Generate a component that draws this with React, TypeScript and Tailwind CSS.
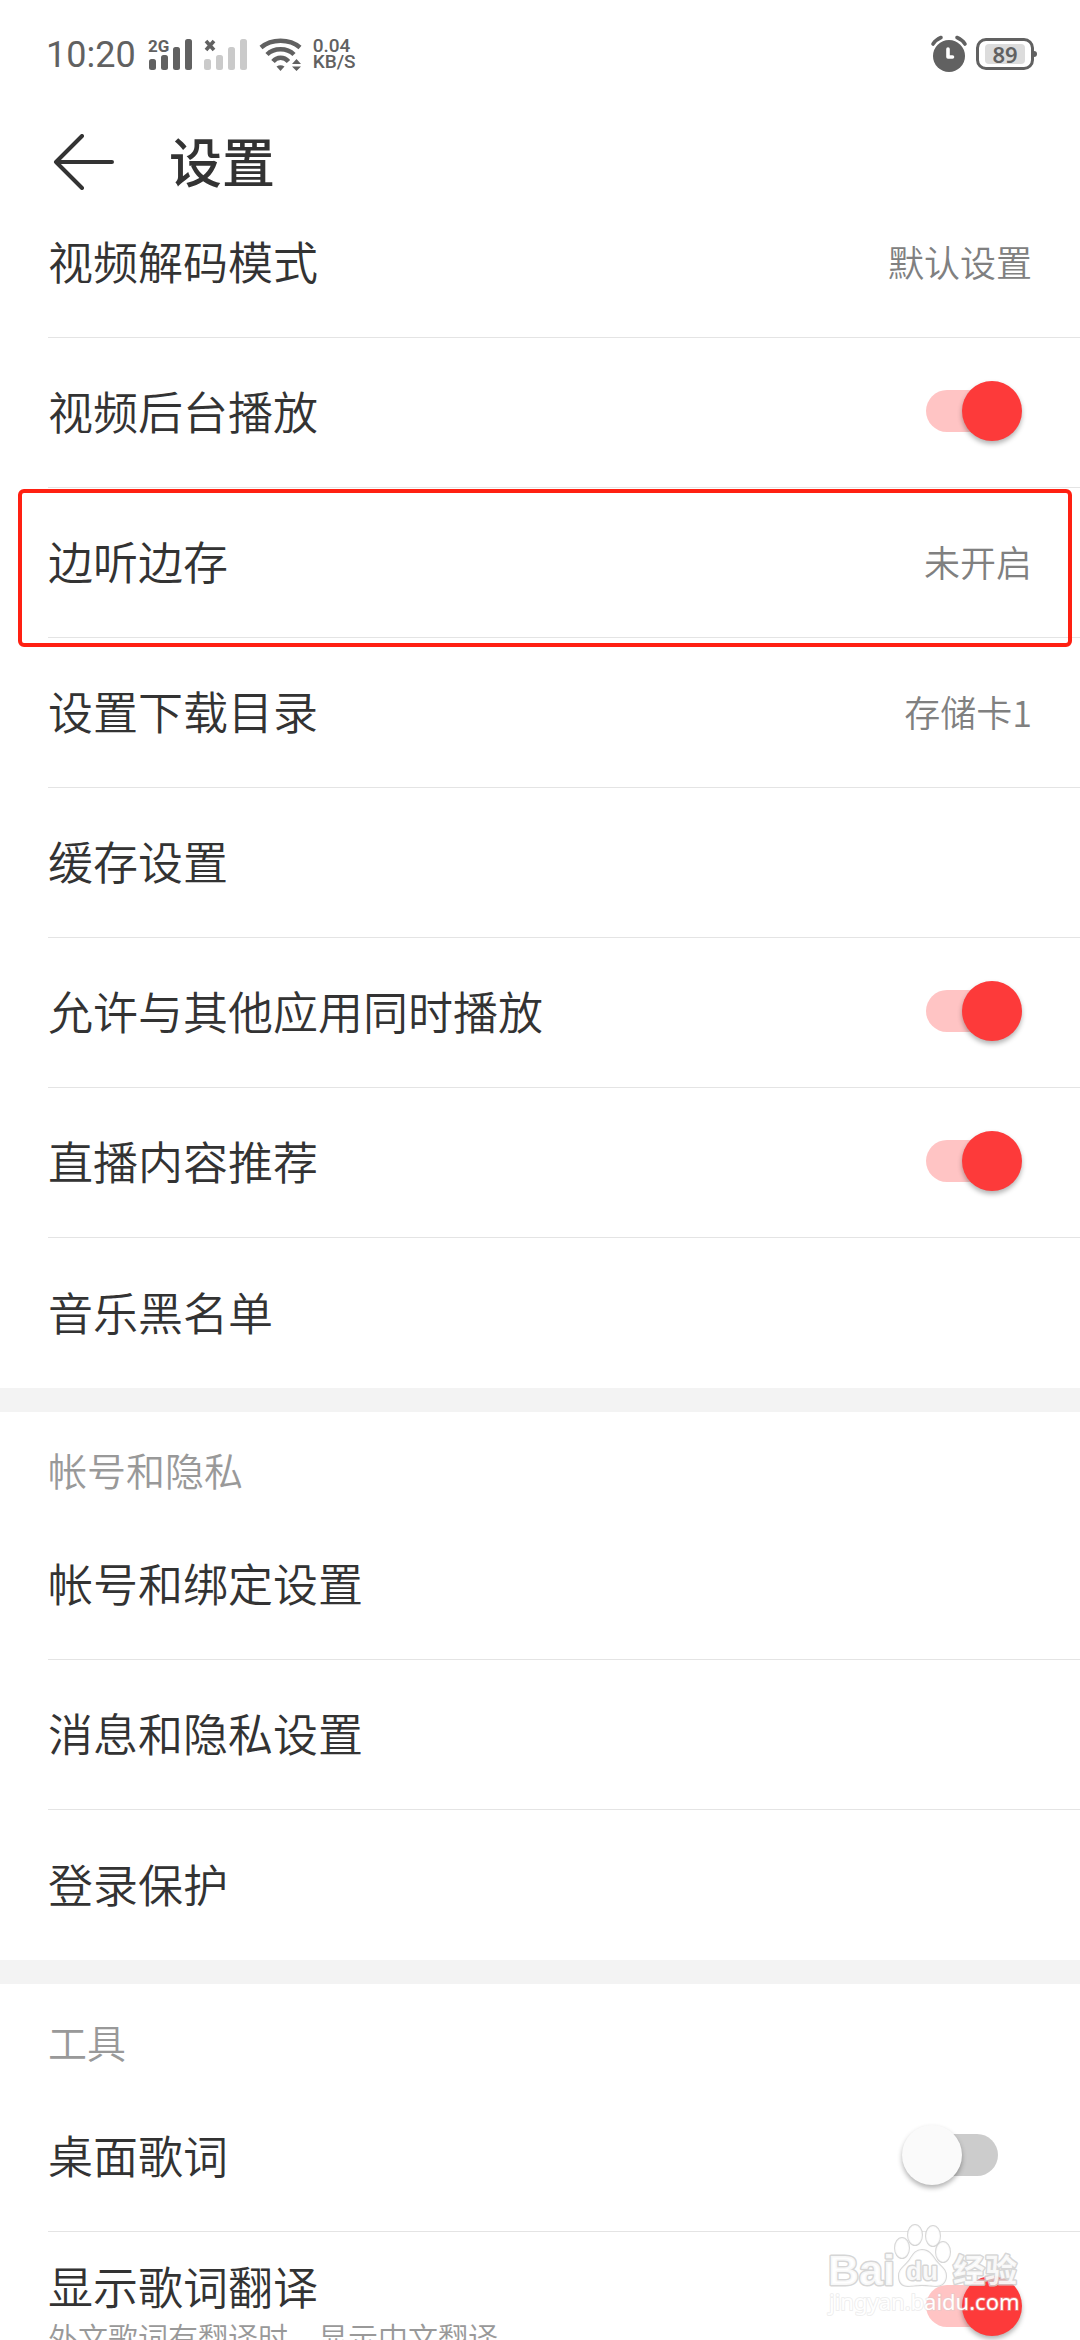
import { useState } from 'react';

type SettingItem = {
  id: string;
  label: string;
  hint?: string;
  value?: string;
  toggle?: boolean;
  highlighted?: boolean;
};

type SettingSection = {
  id: string;
  title?: string;
  items: SettingItem[];
};

const SECTIONS: SettingSection[] = [
  {
    id: 'playback',
    items: [
      { id: 'decode', label: '视频解码模式', value: '默认设置' },
      { id: 'background', label: '视频后台播放', toggle: true },
      { id: 'save-while-listening', label: '边听边存', value: '未开启', highlighted: true },
      { id: 'download-dir', label: '设置下载目录', value: '存储卡1' },
      { id: 'cache', label: '缓存设置' },
      { id: 'mix', label: '允许与其他应用同时播放', toggle: true },
      { id: 'live', label: '直播内容推荐', toggle: true },
      { id: 'blacklist', label: '音乐黑名单' },
    ],
  },
  {
    id: 'account',
    title: '帐号和隐私',
    items: [
      { id: 'binding', label: '帐号和绑定设置' },
      { id: 'privacy', label: '消息和隐私设置' },
      { id: 'login', label: '登录保护' },
    ],
  },
  {
    id: 'tools',
    title: '工具',
    items: [
      { id: 'desktop-lyrics', label: '桌面歌词', toggle: false },
      {
        id: 'lyrics-translation',
        label: '显示歌词翻译',
        hint: '外文歌词有翻译时，显示中文翻译',
        toggle: true,
      },
    ],
  },
];

function SignalIcon({ network }: { network?: string }) {
  return (
    <svg viewBox="0 0 46 34" className="h-[34px] w-[46px]" fill={network ? '#616161' : '#cacaca'}>
      <rect x="1" y="22" width="7" height="11" rx="2.5" />
      <rect x="13" y="18" width="7" height="15" rx="2.5" />
      <rect x="25" y="10" width="7" height="23" rx="2.5" />
      <rect x="37" y="2" width="7" height="31" rx="2.5" />
      {network ? (
        <text x="0" y="15" fontSize="17" fontWeight="700">
          {network}
        </text>
      ) : (
        <path d="M3 4l8 9M11 4l-8 9" stroke="#616161" strokeWidth="3.6" />
      )}
    </svg>
  );
}

function WifiIcon() {
  return (
    <svg viewBox="0 0 44 34" className="h-[34px] w-[44px]" fill="none" stroke="#616161" strokeWidth="4.5">
      <path d="M2 10.500C12.500 1.500 30.500 1.500 41 10.500" />
      <path d="M8 17.500C15 10.500 28 10.500 35 17.500" />
      <path d="M14 24.500C18 19.500 25 19.500 29.500 24.500" />
      <g fill="#616161" stroke="none">
        <path d="M17.500 29.500q4-2.500 8 0l-4 4.500z" />
        <path d="M33 27l4.500-5 4.500 5zM33 29.500h9l-4.500 4.500z" />
      </g>
    </svg>
  );
}

function AlarmIcon() {
  return (
    <svg viewBox="0 0 38 38" className="h-[38px] w-[38px]" fill="none" strokeLinecap="round">
      <circle cx="19" cy="21" r="16" fill="#616161" />
      <path d="M3 9q3-4.500 8-6.500M27 2.500q5 2 8 6.500" stroke="#616161" strokeWidth="3.600" />
      <path d="M18 14v8h4.500" stroke="#fff" strokeWidth="3.600" strokeLinejoin="round" />
    </svg>
  );
}

function StatusBar() {
  return (
    <div className="flex h-[108px] shrink-0 items-center justify-between pr-[43px] pl-[46px] font-['Roboto',sans-serif] text-[#616161]">
      <div className="flex items-center">
        <span className="pt-0.5 text-[36px] leading-9">10:20</span>
        <div className="ml-3 flex items-center gap-[9px]">
          <SignalIcon network="2G" />
          <SignalIcon />
        </div>
        <div className="ml-2.5">
          <WifiIcon />
        </div>
        <div className="ml-2.5 flex flex-col text-[19px] leading-4 font-medium">
          <span>0.04</span>
          <span>KB/S</span>
        </div>
      </div>
      <div className="flex items-center gap-2">
        <AlarmIcon />
        <div className="flex items-center">
          <div className="flex h-8 w-[58px] items-center justify-center rounded-[10px] border-3 border-[#616161]">
            <span className="flex h-5 w-10 items-center justify-center rounded-sm bg-[#dcdcdc] font-['Noto_Sans',sans-serif] text-[22px] leading-5 font-semibold">
              89
            </span>
          </div>
          <span className="h-1.5 w-[3px] rounded-r-full bg-[#616161]" />
        </div>
      </div>
    </div>
  );
}

function Header() {
  return (
    <header className="flex h-20 shrink-0 items-center pt-7 pl-[52px]">
      <button type="button" aria-label="返回">
        <svg viewBox="0 0 64 56" className="h-14 w-16" fill="none" stroke="#333" strokeWidth="4" strokeLinecap="round" strokeLinejoin="round">
          <path d="M30 2L4 28l26 26M4 28h56" />
        </svg>
      </button>
      <h1 className="ml-[53px] pb-1 text-[53px] leading-[52px] font-medium">设置</h1>
    </header>
  );
}

function Toggle({ id, defaultOn }: { id: string; defaultOn: boolean }) {
  const [on, setOn] = useState(defaultOn);

  return (
    <span className="relative mr-2.5 flex h-[60px] w-[120px] shrink-0 items-center px-6">
      <input
        id={id}
        type="checkbox"
        role="switch"
        checked={on}
        onChange={(e) => setOn(e.target.checked)}
        className="peer absolute inset-0 z-10 cursor-pointer opacity-0"
      />
      <span className="h-[42px] w-full rounded-full bg-[#cccccc] peer-checked:bg-[#ffc4c4]" />
      <span className="absolute top-0 left-0 size-[60px] rounded-full bg-[#fafafa] shadow-[0_3px_5px_rgba(0,0,0,0.3)] peer-checked:left-[60px] peer-checked:bg-[#fd3a3a]" />
    </span>
  );
}

function SettingRow({ item, last }: { item: SettingItem; last: boolean }) {
  const rowClass = `flex h-[150px] w-full items-center justify-between pr-12 pb-[3px] text-left ${
    last ? '' : 'border-b border-[#e4e4e4]'
  }`;

  return (
    <li className="relative pl-12">
      {item.toggle !== undefined ? (
        <div className={rowClass}>
          <label htmlFor={item.id} className="flex flex-col text-[45px] leading-[60px] font-[350]">
            {item.label}
            {item.hint && <span className="text-[30px] leading-10 text-[#999]">{item.hint}</span>}
          </label>
          <Toggle id={item.id} defaultOn={item.toggle} />
        </div>
      ) : (
        <button type="button" className={rowClass}>
          <span className="text-[45px] leading-[60px] font-[350]">{item.label}</span>
          {item.value && (
            <span className="text-[36px] leading-[60px] font-[350] text-[#808080]">{item.value}</span>
          )}
        </button>
      )}
      {item.highlighted && (
        <div className="pointer-events-none absolute top-px right-2 -bottom-[9px] left-[18px] z-10 rounded-md border-4 border-[#ff2012]" />
      )}
    </li>
  );
}

function Watermark() {
  return (
    <svg
      viewBox="0 0 210 110"
      className="pointer-events-none absolute right-[50px] bottom-[15px] z-20 h-[110px] w-[210px]"
      fill="#fff"
      stroke="#cfcfcf"
      strokeWidth="3"
      strokeLinejoin="round"
      paintOrder="stroke"
      aria-hidden="true"
    >
      <g fillOpacity="0.85" strokeOpacity="0.85">
        <text x="8" y="70" fontSize="43" fontWeight="700" className="font-['Liberation_Sans',sans-serif]">
          Bai
        </text>
        <g strokeWidth="2">
          <ellipse cx="95" cy="20" rx="7" ry="10" />
          <ellipse cx="113" cy="21" rx="7" ry="10" />
          <ellipse cx="82" cy="33" rx="7" ry="10" />
          <ellipse cx="123" cy="37" rx="7" ry="10" />
          <path d="M102 35c7 0 10 5 14 11 5 6 10 8 10 15 0 6-4 10-10 10-5 0-8-1-14-1s-9 1-14 1c-6 0-9-4-9-10 0-7 5-9 10-15 4-6 6-11 13-11z" />
        </g>
        <text x="86" y="65" fontSize="26" fontWeight="700" className="font-['Liberation_Sans',sans-serif]">
          du
        </text>
        <text x="133" y="67" fontSize="32" fontWeight="700" className="font-['Noto_Sans_CJK_SC',sans-serif]">
          经验
        </text>
      </g>
      <text x="9" y="95" fontSize="22" strokeWidth="2" strokeOpacity="0.35" className="font-['Noto_Sans',sans-serif]">
        jingyan.baidu.com
      </text>
    </svg>
  );
}

export default function App() {
  return (
    <div className="relative flex h-screen flex-col overflow-hidden bg-white font-['Noto_Sans_CJK_SC',sans-serif] text-[#333]">
      <StatusBar />
      <Header />
      <main className="min-h-0 flex-1 overflow-hidden">
        {SECTIONS.map((section, index) => (
          <section key={section.id} className={index > 0 ? 'border-t-24 border-[#f3f3f3]' : ''}>
            {section.title && (
              <h2 className="flex h-[98px] items-center pt-4 pl-12 text-[39px] leading-[60px] font-[350] text-[#999]">
                {section.title}
              </h2>
            )}
            <ul>
              {section.items.map((item, i) => (
                <SettingRow key={item.id} item={item} last={i === section.items.length - 1} />
              ))}
            </ul>
          </section>
        ))}
      </main>
      <Watermark />
    </div>
  );
}
